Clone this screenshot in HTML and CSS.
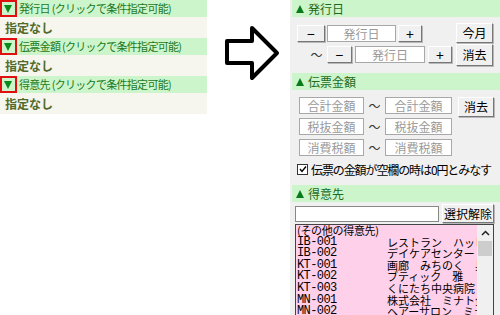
FILE: index.html
```html
<!DOCTYPE html>
<html lang="ja">
<head>
    <meta charset="UTF-8">
    <title>条件指定</title>
    <link rel="stylesheet" href="styles.css">
</head>
<body>
    <div class="before">
        <div class="lhead"><span class="toggle"></span>発行日 (クリックで条件指定可能)</div>
        <div class="lnone">指定なし</div>
        <div class="lhead"><span class="toggle"></span>伝票金額 (クリックで条件指定可能)</div>
        <div class="lnone">指定なし</div>
        <div class="lhead"><span class="toggle"></span>得意先 (クリックで条件指定可能)</div>
        <div class="lnone">指定なし</div>
    </div>

    <div class="arrow">
        <svg width="60" height="60" viewBox="0 0 60 60">
            <polygon points="5,18 30,18 30,5 55,30 30,55 30,40 5,40" fill="#fff" stroke="#000" stroke-width="4" stroke-linejoin="round"/>
        </svg>
    </div>

    <div class="after">
        <div class="rhead"><span class="up"></span>発行日</div>
        <div class="dates">
            <div class="date-rows">
                <div class="row1">
                    <button class="btn minus">−</button>
                    <input class="field d1" placeholder="発行日">
                    <button class="btn plus">+</button>
                </div>
                <div class="row2">
                    <span class="tilde">〜</span>
                    <button class="btn minus2">−</button>
                    <input class="field d2" placeholder="発行日">
                    <button class="btn plus">+</button>
                </div>
            </div>
            <div class="side">
                <button class="btn side-btn">今月</button>
                <button class="btn side-btn tall">消去</button>
            </div>
        </div>

        <div class="rhead"><span class="up"></span>伝票金額</div>
        <div class="amounts">
            <div class="amount-grid">
                <input class="field a1" placeholder="合計金額">
                <span class="tilde">〜</span>
                <input class="field a2" placeholder="合計金額">
                <input class="field a1" placeholder="税抜金額">
                <span class="tilde">〜</span>
                <input class="field a2" placeholder="税抜金額">
                <input class="field a1" placeholder="消費税額">
                <span class="tilde">〜</span>
                <input class="field a2" placeholder="消費税額">
            </div>
            <button class="btn clear">消去</button>
        </div>
        <div class="check-row">
            <span class="chk">
                <svg width="8" height="8" viewBox="0 0 8 8"><path d="M1 4 L3 6.5 L7 1.5" fill="none" stroke="#000" stroke-width="1.4"/></svg>
            </span>
            伝票の金額が空欄の時は0円とみなす
        </div>

        <div class="rhead"><span class="up"></span>得意先</div>
        <div class="search">
            <input class="field cust">
            <button class="btn unselect">選択解除</button>
        </div>
        <div class="list">
            <div class="items">
                <div class="item other">(その他の得意先)</div>
                <div class="item"><span class="code">IB-001</span><span class="name">レストラン　ハッピー</span></div>
                <div class="item"><span class="code">IB-002</span><span class="name">デイケアセンター　ひまわり</span></div>
                <div class="item"><span class="code">KT-001</span><span class="name">画廊　みちのく　具象館</span></div>
                <div class="item"><span class="code">KT-002</span><span class="name">ブティック　雅</span></div>
                <div class="item"><span class="code">KT-003</span><span class="name">くにたち中央病院</span></div>
                <div class="item"><span class="code">MN-001</span><span class="name">株式会社　ミナト企画</span></div>
                <div class="item"><span class="code">MN-002</span><span class="name">ヘアーサロン　ミナミ</span></div>
            </div>
            <div class="scroll">
                <div class="sarrow">
                    <svg width="9" height="6" viewBox="0 0 9 6"><path d="M1 5 L4.5 1.5 L8 5" fill="none" stroke="#222" stroke-width="1.5"/></svg>
                </div>
                <div class="thumb"></div>
            </div>
        </div>
    </div>
</body>
</html>
```

FILE: styles.css
```css
body {
    margin: 0;
    width: 500px;
    height: 315px;
    overflow: hidden;
    display: flex;
    background-color: #fff;
    font-family: "Noto Sans CJK JP", "Noto Sans", sans-serif;
    font-size: 12px;
}

/* left: collapsed panel */
.before {
    width: 207px;
    height: 114px;
    background-color: #f6f6ee;
}

.lhead {
    height: 17px;
    display: flex;
    align-items: center;
    background-color: #cdf5cc;
    color: #1c7a1c;
    font-size: 11px;
    line-height: 17px;
    white-space: nowrap;
    letter-spacing: -0.7px;
}

.toggle {
    width: 13px;
    height: 13px;
    border: 2px solid #e01010;
    margin-right: 2px;
    position: relative;
    flex-shrink: 0;
}

.toggle::after {
    content: "";
    position: absolute;
    left: 2px;
    top: 3px;
    border-left: 4.5px solid transparent;
    border-right: 4.5px solid transparent;
    border-top: 8px solid #0a8a1a;
}

.lnone {
    height: 21px;
    line-height: 21px;
    padding-left: 5px;
    color: #4f6a2c;
    font-weight: bold;
}

/* middle arrow */
.arrow {
    width: 83px;
    padding: 23px 0 0 15px;
    box-sizing: border-box;
}

/* right: expanded panel */
.after {
    width: 210px;
    height: 315px;
    background-color: #f0f0f0;
    overflow: hidden;
}

.rhead {
    height: 17px;
    line-height: 17px;
    margin-left: 2px;
    padding-left: 4px;
    background-color: #cdf5cc;
    color: #1c6a1c;
    display: flex;
    align-items: center;
}

.up {
    width: 0;
    height: 0;
    border-left: 4.5px solid transparent;
    border-right: 4.5px solid transparent;
    border-bottom: 8px solid #0a7a1a;
    margin-right: 4px;
}

.btn {
    font-family: inherit;
    font-size: 12px;
    padding: 0;
    background-color: #f0f0f0;
    color: #000;
    border: 1px solid;
    border-color: #fff #777 #777 #fff;
    box-shadow: 1px 1px 0 #b8b8b8;
    line-height: 1;
}

.minus, .minus2, .plus {
    font-size: 14px;
}

.field {
    font-family: inherit;
    font-size: 12px;
    padding: 0;
    height: 17px;
    box-sizing: border-box;
    border: 1px solid #a8a8a8;
    background-color: #fff;
    text-align: center;
    outline: none;
}

.field::placeholder {
    color: #9a9a9a;
}

.tilde {
    text-align: center;
    color: #333;
    line-height: 17px;
}

.dates {
    height: 56px;
    display: flex;
    padding: 6px 7px 0 7px;
    box-sizing: border-box;
}

.date-rows {
    flex: 1;
}

.row1 {
    display: flex;
    gap: 2px;
    margin-top: 2px;
    height: 17px;
}

.row2 {
    display: flex;
    margin-top: 4px;
    padding-left: 9px;
    height: 17px;
}

.row2 .tilde {
    width: 21px;
}

.minus {
    width: 28px;
}

.minus2 {
    width: 25px;
    margin-right: 3px;
}

.d1 {
    width: 69px;
}

.d2 {
    width: 70px;
    margin-right: 3px;
}

.plus {
    width: 24px;
}

.side {
    width: 37px;
    display: flex;
    flex-direction: column;
    gap: 1px;
}

.side-btn {
    height: 20px;
}

.side-btn.tall {
    height: 22px;
}

.amounts {
    display: flex;
    align-items: flex-start;
    padding: 7px 0 0 9px;
}

.amount-grid {
    display: grid;
    grid-template-columns: 65px 21px 67px;
    row-gap: 4px;
}

.clear {
    width: 36px;
    height: 20px;
    margin-left: 6px;
}

.check-row {
    display: flex;
    align-items: center;
    height: 20px;
    margin-top: 3px;
    margin-bottom: 6px;
    padding-left: 7px;
    color: #000;
    white-space: nowrap;
    letter-spacing: -1.1px;
}

.chk {
    width: 9px;
    height: 9px;
    border: 1px solid #333;
    background-color: #fff;
    display: flex;
    align-items: center;
    justify-content: center;
    margin-right: 3px;
}

.search {
    display: flex;
    align-items: center;
    gap: 3px;
    padding: 2px 0 0 5px;
    height: 19px;
}

.cust {
    width: 144px;
    height: 16px;
    border-color: #888;
}

.unselect {
    width: 52px;
    height: 19px;
}

.list {
    display: flex;
    margin: 1px 0 0 5px;
    width: 199px;
    height: 100px;
    box-sizing: border-box;
    border: 1px solid #444;
    background-color: #ffd0ea;
}

.items {
    flex: 1;
    overflow: hidden;
    padding-left: 1px;
}

.item {
    display: flex;
    align-items: center;
    height: 11.6px;
    line-height: 11.6px;
    white-space: nowrap;
    color: #000;
}

.item.other {
    font-size: 11px;
    letter-spacing: -0.3px;
}

.code {
    width: 90px;
    flex-shrink: 0;
    font-family: "Liberation Mono", monospace;
    font-size: 12px;
    letter-spacing: -0.6px;
}

.name {
    font-size: 11px;
}

.scroll {
    width: 16px;
    background-color: #f0f0f0;
}

.sarrow {
    height: 15px;
    display: flex;
    align-items: center;
    justify-content: center;
}

.thumb {
    height: 15px;
    margin: 1px 1px 0 1px;
    background-color: #cdcdcd;
}
```
